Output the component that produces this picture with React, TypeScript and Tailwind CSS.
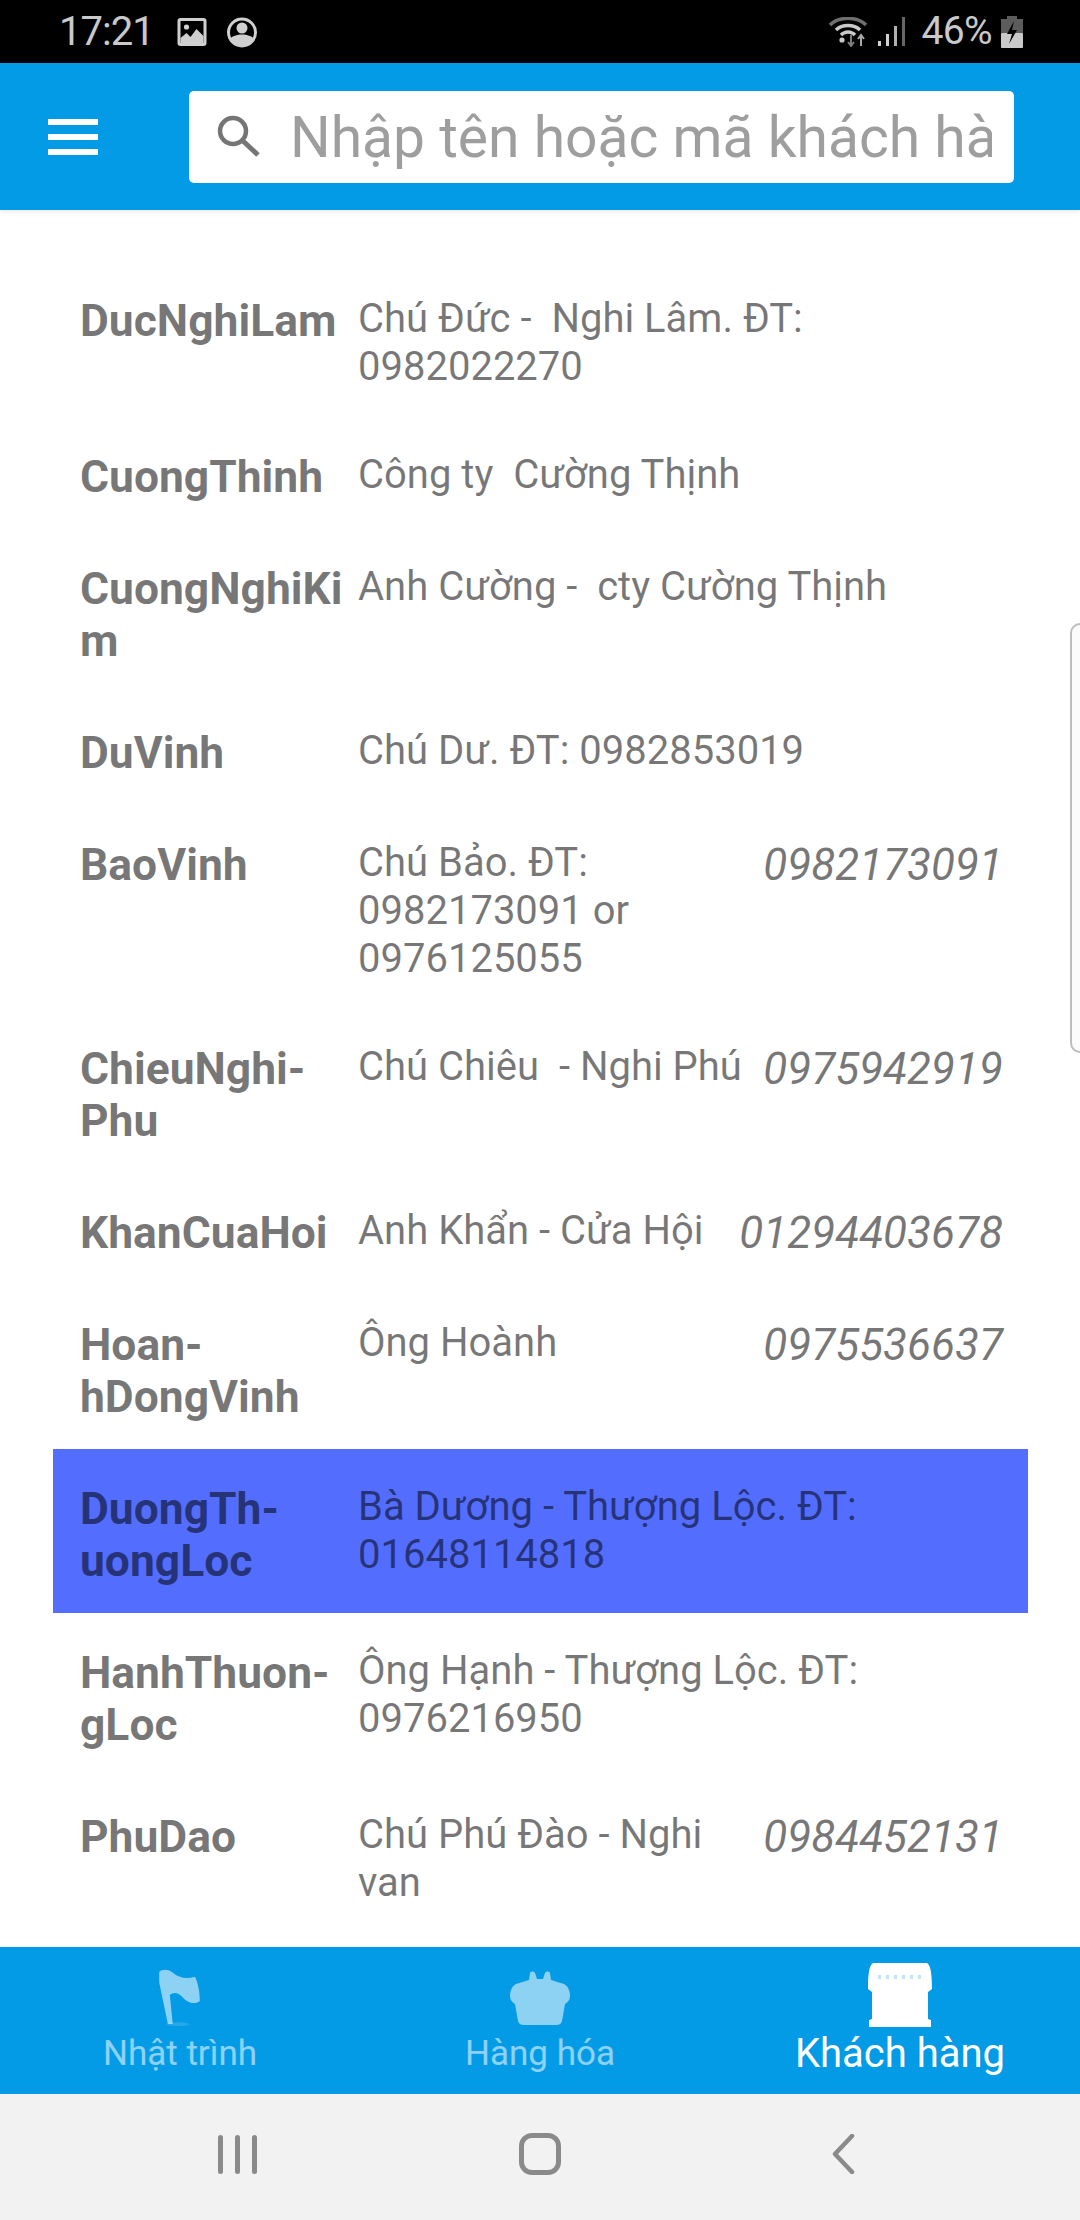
import React from "react";

type Row = { name: string; desc: string; phone?: string; selected?: boolean };

const rows: Row[] = [
  { name: "DucNghiLam", desc: "Chú Đức -  Nghi Lâm. ĐT: 0982022270" },
  { name: "CuongThinh", desc: "Công ty  Cường Thịnh" },
  { name: "CuongNghiKi\nm", desc: "Anh Cường -  cty Cường Thịnh" },
  { name: "DuVinh", desc: "Chú Dư. ĐT: 0982853019" },
  { name: "BaoVinh", desc: "Chú Bảo. ĐT: 0982173091 or 0976125055", phone: "0982173091" },
  { name: "ChieuNghi-\nPhu", desc: "Chú Chiêu  - Nghi Phú", phone: "0975942919" },
  { name: "KhanCuaHoi", desc: "Anh Khẩn - Cửa Hội", phone: "01294403678" },
  { name: "Hoan-\nhDongVinh", desc: "Ông Hoành", phone: "0975536637" },
  { name: "DuongTh-\nuongLoc", desc: "Bà Dương - Thượng Lộc. ĐT: 01648114818", selected: true },
  { name: "HanhThuon-\ngLoc", desc: "Ông Hạnh - Thượng Lộc. ĐT: 0976216950" },
  { name: "PhuDao", desc: "Chú Phú Đào - Nghi van", phone: "0984452131" },
];

function ListRow({ name, desc, phone, selected }: Row) {
  return (
    <div className={`flex w-[975px] ml-[53px] pl-[27px] pr-[25px] pt-[34px] pb-[26px] text-black/54 ${selected ? "bg-[#536dfe]" : ""}`}>
      <div className="w-[278px] shrink-0 whitespace-pre-line font-bold text-[44.4px] leading-[52px]">{name}</div>
      <div className="flex-1 min-w-0 whitespace-pre-wrap text-[40px] leading-[48px]">{desc}</div>
      {phone && <div className="shrink-0 ml-[12px] italic text-[44px] leading-[52px]">{phone}</div>}
    </div>
  );
}

function StatusBar() {
  return (
    <div className="h-[63px] bg-black flex items-center pl-[59px] pr-[57px] text-[#c9c9c9] shrink-0">
      <span className="text-[40px] leading-[63px] tracking-[-1px] w-[118px]">17:21</span>
      <svg width="30" height="28" viewBox="0 0 29 28" className="mt-[1px]">
        <rect width="29" height="28" rx="3" fill="#cfcfcf" />
        <rect x="3" y="3" width="23" height="22" fill="#000" />
        <circle cx="9" cy="9" r="2.6" fill="#cfcfcf" />
        <path d="M3 25 L3 20 L9 15 L13 19 L19 11 L26 18 L26 25 Z" fill="#cfcfcf" />
      </svg>
      <svg width="30" height="31" viewBox="0 0 30 31" className="ml-[20px] mt-[1px]">
        <circle cx="15" cy="15.5" r="13.5" fill="none" stroke="#cfcfcf" strokeWidth="3" />
        <circle cx="15" cy="11" r="5.5" fill="#cfcfcf" />
        <path d="M3 22 C7 16 23 16 27 22 C24 32 6 32 3 22 Z" fill="#cfcfcf" />
      </svg>
      <div className="flex-1" />
      <svg width="40" height="30" viewBox="0 0 40 30">
        <path d="M1 8 C10 -1 28 -1 37 8" fill="none" stroke="#6e6e6e" strokeWidth="3.5" />
        <path d="M7 13 C13 7 25 7 31 13" fill="none" stroke="#c9c9c9" strokeWidth="3.5" />
        <path d="M12 18 C16 14 22 14 26 18" fill="none" stroke="#c9c9c9" strokeWidth="3.5" />
        <circle cx="13" cy="23" r="2.6" fill="#c9c9c9" />
        <path d="M22 18 V28 M19 25 L22 29 L25 25" fill="none" stroke="#7c7c7c" strokeWidth="2" />
        <path d="M32 29 V19 M29 22 L32 18 L35 22" fill="none" stroke="#a8a8a8" strokeWidth="2" />
      </svg>
      <svg width="28" height="29" viewBox="0 0 28 29" className="ml-[9px]">
        <rect x="0" y="24" width="3" height="5" fill="#d0d0d0" />
        <rect x="8" y="17" width="3" height="12" fill="#d0d0d0" />
        <rect x="16" y="9" width="3" height="20" fill="#b0b0b0" />
        <rect x="24" y="0" width="3" height="29" fill="#666" />
      </svg>
      <span className="ml-[15px] text-[39px] leading-[63px] tracking-[-0.6px]">46%</span>
      <svg width="22" height="32" viewBox="0 0 22 32" className="ml-[9px]">
        <rect x="6" y="0" width="10" height="3" fill="#5c5c5c" />
        <rect x="0" y="3" width="22" height="14" fill="#5c5c5c" />
        <rect x="0" y="17" width="22" height="15" rx="1" fill="#c9c9c9" />
        <path d="M13 5 L6 18 L11 18 L8 28 L16 14 L11 14 Z" fill="#000" />
      </svg>
    </div>
  );
}

function Header() {
  return (
    <div className="h-[147px] bg-[#039be5] flex items-center pl-[48px] pr-[66px] shrink-0 shadow-[0_2px_4px_rgba(0,0,0,0.08)] z-10">
      <div className="w-[50px] flex flex-col gap-[9px]">
        <div className="h-[6px] bg-white" />
        <div className="h-[6px] bg-white" />
        <div className="h-[6px] bg-white" />
      </div>
      <div className="ml-[91px] h-[92px] flex-1 bg-white rounded-[5px] flex items-center pl-[28px] pr-[22px] overflow-hidden">
        <svg width="43" height="42" viewBox="0 0 43 42" className="shrink-0 -mt-[2px]">
          <circle cx="16" cy="16" r="13" fill="none" stroke="#757575" strokeWidth="4.5" />
          <path d="M25 25 L41 40" stroke="#757575" strokeWidth="5" />
        </svg>
        <div className="ml-[30px] flex-1 overflow-hidden whitespace-nowrap text-[57px] leading-[92px] text-[#9e9e9e] mt-[3px] h-[92px]">
          Nhập tên hoặc mã khách hàng
        </div>
      </div>
    </div>
  );
}

function Tab({ label, active, icon }: { label: string; active?: boolean; icon: React.ReactNode }) {
  return (
    <div className={`flex flex-col items-center ${active ? "text-white" : "text-white/55"}`}>
      <div className="h-[80px] flex items-end justify-center">{icon}</div>
      <span className={`mt-[5px] leading-[44px] whitespace-nowrap ${active ? "text-[40px]" : "text-[35px]"}`}>{label}</span>
    </div>
  );
}

function BottomNav() {
  return (
    <div className="h-[147px] bg-[#039be5] grid grid-cols-3 shrink-0">
      <Tab
        label="Nhật trình"
        icon={
          <svg width="43" height="58" viewBox="0 0 44 60" fill="currentColor" className="blur-[0.7px] -ml-[2px]">
            <path d="M1 3 C4 0 11 0 15 4 C21 9 29 11 38 8 C41 14 43 23 43 33 C36 38 29 34 24 28 C20 24 15 24 12 27 L15 57 L10 57 L1 14 Z" />
            <ellipse cx="20" cy="57" rx="12" ry="2" opacity="0.25" />
          </svg>
        }
      />
      <Tab
        label="Hàng hóa"
        icon={
          <svg width="60" height="54" viewBox="0 0 60 54" fill="currentColor" className="blur-[0.7px] mb-[2px]">
            <path d="M19 9 L20 2 C21 0 24 0 25 2 L27 8 L33 8 L35 2 C36 0 39 0 40 2 L41 9 L54 13 C58 15 60 20 60 25 C60 29 58 31 55 33 L52 50 C51 53 49 54 46 54 L14 54 C11 54 9 53 8 50 L5 33 C2 31 0 29 0 25 C0 20 2 15 6 13 Z" />
          </svg>
        }
      />
      <Tab
        label="Khách hàng"
        active
        icon={
          <svg width="64" height="64" viewBox="0 0 64 64" fill="currentColor" className="blur-[0.5px]">
            <path d="M5 0 L59 0 C62 2 64 8 64 26 L60 29 L60 56 L63 57 L63 64 L1 64 L1 57 L4 56 L4 29 L0 26 C0 8 2 2 5 0 Z" />
            <path d="M10 14 H54" stroke="#039be5" strokeOpacity="0.25" strokeWidth="4" strokeDasharray="3 5" />
          </svg>
        }
      />
    </div>
  );
}

function SystemNav() {
  return (
    <div className="h-[126px] shrink-0 bg-[#f2f2f2] flex items-center pb-[6px]">
      <div className="w-[218px]" />
      <div className="flex gap-[12px]">
        <div className="w-[5px] h-[39px] bg-[#8a8a8a] rounded-full" />
        <div className="w-[5px] h-[39px] bg-[#8a8a8a] rounded-full" />
        <div className="w-[5px] h-[39px] bg-[#8a8a8a] rounded-full" />
      </div>
      <div className="ml-[262px] w-[42px] h-[42px] border-[5px] border-[#8a8a8a] rounded-[13px]" />
      <svg width="24" height="40" viewBox="0 0 24 40" className="ml-[270px]">
        <path d="M21 2 L4 20 L21 38" fill="none" stroke="#8a8a8a" strokeWidth="4.5" strokeLinecap="round" strokeLinejoin="round" />
      </svg>
    </div>
  );
}

export default function App() {
  return (
    <div className="w-[1080px] h-[2220px] flex flex-col bg-white relative overflow-hidden" style={{ fontFamily: "Roboto, sans-serif" }}>
      <StatusBar />
      <Header />
      <div className="flex-1 min-h-0 overflow-hidden pt-[51px]">
        {rows.map((r) => (
          <ListRow key={r.name} {...r} />
        ))}
      </div>
      <BottomNav />
      <SystemNav />
      <div className="absolute left-[1070px] top-[623px] w-[20px] h-[430px] border-2 border-[#bdbdbd] rounded-[14px] bg-[#fbfbfb]" />
    </div>
  );
}
